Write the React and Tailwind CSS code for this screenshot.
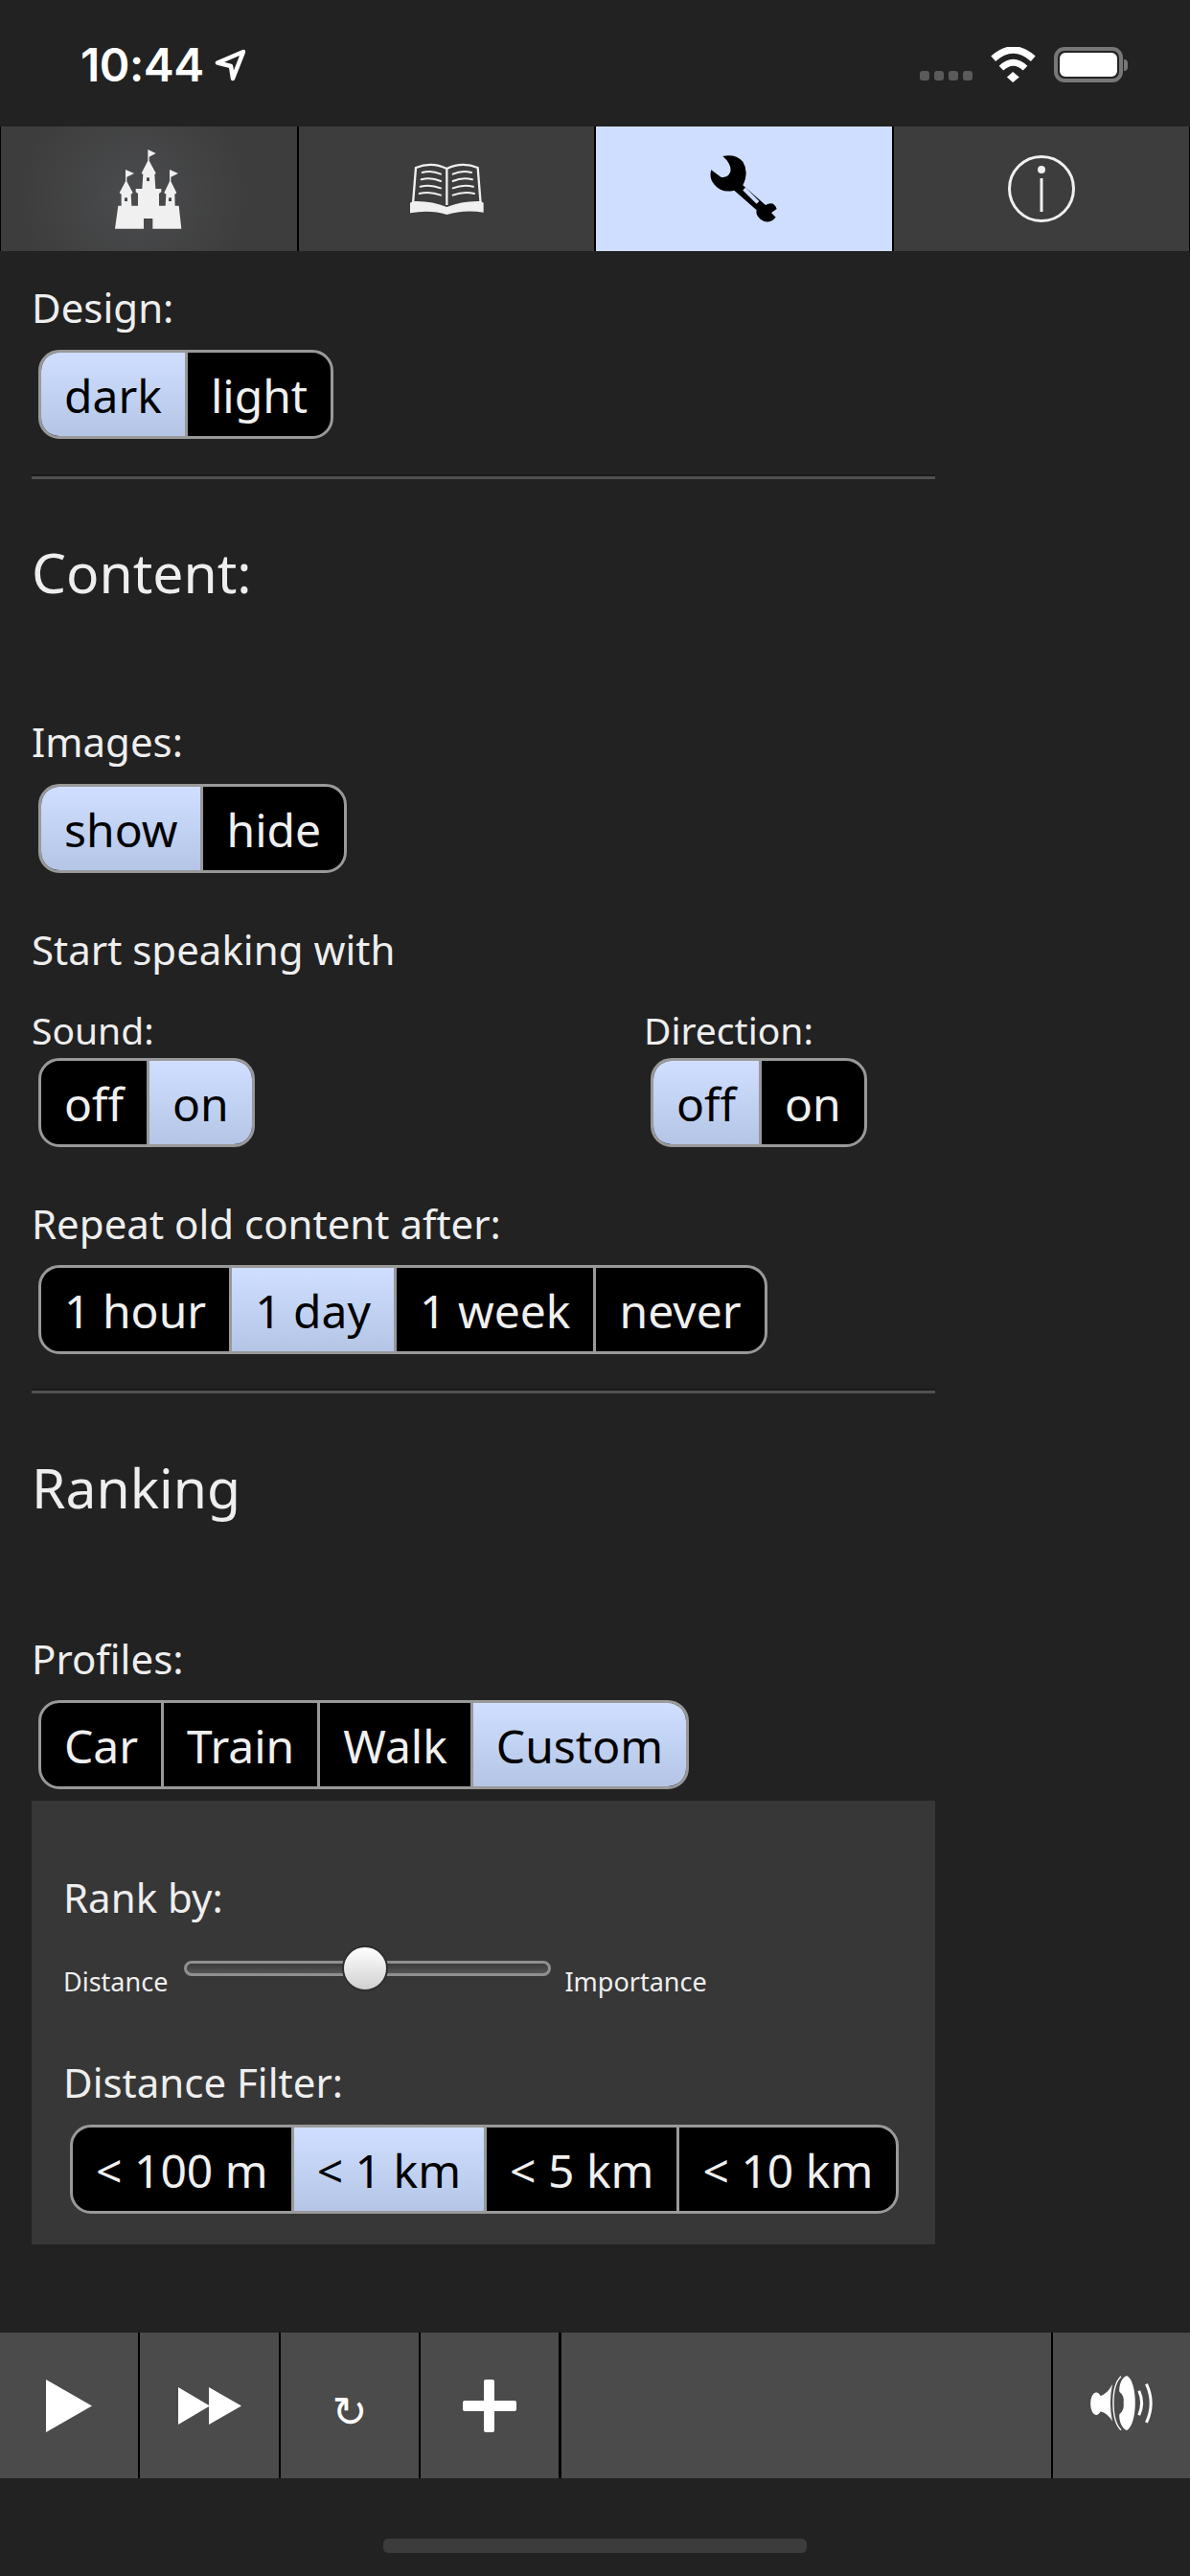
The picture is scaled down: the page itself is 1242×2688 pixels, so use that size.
import React from 'react';

const Seg = ({ items, active, className = '' }) => (
  <div className={`inline-flex h-[93px] rounded-[22px] border-[3px] border-[#999] overflow-hidden bg-black ${className}`}>
    {items.map((item, i) => (
      <div
        key={item}
        className={`flex items-center justify-center px-[24px] pt-[2px] text-[48px] leading-none ${i < items.length - 1 ? 'border-r-[3px] border-[#999]' : ''} ${i === active ? 'bg-gradient-to-b from-[#d0dfff] to-[#b4c5e5] text-black' : 'text-[#f0f0f0]'}`}
      >
        {item}
      </div>
    ))}
  </div>
);

const Label = ({ children, className = '' }) => (
  <div className={`text-[42px] leading-[56px] text-[#eeeeee] ${className}`}>{children}</div>
);

const SmallLabel = ({ children }) => (
  <div className="text-[39px] leading-[56px] text-[#eeeeee]">{children}</div>
);

const Heading = ({ children, className = '' }) => (
  <div className={`text-[57px] leading-[70px] text-[#eeeeee] ${className}`}>{children}</div>
);

const Divider = ({ className = '' }) => (
  <div className={`h-[5px] w-[943px] border-t-2 border-[#1a1a1a] bg-[#505050] ${className}`} />
);

const Castle = () => (
  <svg width="70" height="83" viewBox="120 72 210 249">
    <path fill="#f0f0f0" d="M120 320 L130 248 L140 248 L140 212 L134 208 L153 172 L153 135 L180 147 L157 158 L157 172 L176 208 L170 212 L172 248 L192 248 L192 210 L185 205 L185 195 L205 195 L208 150 L203 146 L223 107 L223 72 L248 84 L227 95 L227 107 L248 146 L244 150 L247 195 L265 195 L265 205 L258 210 L258 248 L278 248 L280 212 L274 208 L291 172 L291 135 L318 147 L295 158 L295 172 L313 208 L307 212 L308 248 L320 248 L328 320 L238 320 L238 288 L210 288 L210 320 Z" />
    <rect x="150" y="223" width="9" height="11" fill="#46474a" />
    <rect x="219" y="160" width="9" height="11" fill="#46474a" />
    <rect x="288" y="223" width="9" height="11" fill="#46474a" />
  </svg>
);

const Book = () => (
  <svg width="78" height="54" viewBox="80 120 232 162">
    <g fill="none" stroke="#f0f0f0" strokeWidth="7">
      <path d="M91 248 L100 135 Q150 115 197 138 L197 252" />
      <path d="M303 248 L294 135 Q245 115 197 138" />
    </g>
    <path fill="#f0f0f0" d="M82 245 L92 240 Q150 238 197 258 Q245 238 303 240 L312 245 L312 275 Q250 265 197 282 Q145 265 82 277 Z" />
    <g fill="none" stroke="#f0f0f0" strokeWidth="6" strokeLinecap="round">
      <path d="M120 150 Q150 142 178 155" />
      <path d="M117 172 Q148 164 178 177" />
      <path d="M114 194 Q146 186 178 199" />
      <path d="M111 216 Q144 208 178 221" />
      <path d="M274 150 Q244 142 216 155" />
      <path d="M277 172 Q246 164 216 177" />
      <path d="M280 194 Q248 186 216 199" />
      <path d="M283 216 Q250 208 216 221" />
    </g>
  </svg>
);

const Wrench = () => (
  <svg width="70" height="70" viewBox="1022 98 210 210">
    <path fill="#000" d="M1062 101 Q1100 92 1125 118 Q1145 150 1125 192 L1196 254 Q1222 240 1231 266 L1214 278 L1228 292 Q1205 318 1180 298 Q1164 285 1168 270 L1098 208 Q1060 218 1036 190 Q1018 170 1026 144 L1056 166 Q1078 170 1086 150 Q1090 125 1062 101 Z" />
    <path stroke="#cfdeff" strokeWidth="12" d="M1129 203 L1172 246" />
  </svg>
);

const Info = () => (
  <svg width="70" height="70" viewBox="0 0 70 70">
    <circle cx="35" cy="35" r="33.5" fill="none" stroke="#f0f0f0" strokeWidth="3" />
    <circle cx="35" cy="15" r="4" fill="#f0f0f0" />
    <rect x="33.5" y="24" width="3" height="35" fill="#f0f0f0" />
  </svg>
);

const Speaker = () => (
  <svg width="66" height="57" viewBox="172 58 196 170">
    <ellipse cx="190" cy="145" rx="18" ry="35" fill="#fff" />
    <path fill="#fff" d="M200 122 Q225 115 240 85 Q228 143 240 200 Q225 172 200 168 Z" />
    <path fill="#fff" fillRule="evenodd" d="M285 58 C320 75 320 210 285 228 C268 222 260 195 262 178 Q278 165 275 143 Q278 120 262 108 C260 90 268 64 285 58 Z" />
    <path fill="none" stroke="#fff" strokeWidth="4" d="M267 60 C235 90 235 195 267 227" />
    <path fill="none" stroke="#fff" strokeWidth="9" d="M323 105 Q340 143 323 181" />
    <path fill="none" stroke="#fff" strokeWidth="9" d="M346 84 Q374 143 346 204" />
  </svg>
);

export default function App() {
  return (
    <div className="w-[1242px] h-[2688px] flex flex-col bg-[#222222] overflow-hidden font-['Noto_Sans',sans-serif]">
      {/* status bar */}
      <div className="h-[132px] shrink-0 flex items-start justify-between pt-[49px] pl-[84px] pr-[65px]">
        <div className="flex items-center gap-[11px]">
          <span className="font-['Inter',sans-serif] font-semibold text-[48px] leading-[38px] tracking-[-0.5px] text-white">10:44</span>
          <svg width="32" height="34" viewBox="226 51 32 34">
            <path d="M256 54 L229 65.5 L243 69 L245 82 Z" fill="none" stroke="#fff" strokeWidth="4.5" strokeLinejoin="round" />
          </svg>
        </div>
        <div className="flex items-end gap-[19px]">
          <div className="flex gap-[5px] mb-[2px]">
            <div className="w-[10px] h-[10px] rounded-[3px] bg-[#5a5a5a]" />
            <div className="w-[10px] h-[10px] rounded-[3px] bg-[#5a5a5a]" />
            <div className="w-[10px] h-[10px] rounded-[3px] bg-[#5a5a5a]" />
            <div className="w-[10px] h-[10px] rounded-[3px] bg-[#5a5a5a]" />
          </div>
          <svg width="47" height="37" viewBox="275 55 142 112">
            <path d="M283 92 Q346 36 409 92" fill="none" stroke="#fff" strokeWidth="22" />
            <path d="M308 122 Q346 86 384 122" fill="none" stroke="#fff" strokeWidth="20" />
            <path d="M326 150 L345 134 L365 150 L345 167 Z" fill="#fff" />
          </svg>
          <div className="flex items-center">
            <div className="w-[72px] h-[37px] rounded-[11px] border-[4px] border-[#777] p-[2px]">
              <div className="w-full h-full rounded-[6px] bg-white" />
            </div>
            <div className="w-[4px] h-[12px] rounded-r-[4px] bg-[#777] ml-[1px]" />
          </div>
        </div>
      </div>

      {/* top tabs */}
      <div className="h-[130px] shrink-0 grid grid-cols-4 gap-[2px] bg-black px-[1px]">
        <div className="flex items-center justify-center bg-[radial-gradient(circle_at_45%_55%,#4b4c4e_0%,#3d3d3d_65%)]"><Castle /></div>
        <div className="flex items-center justify-center bg-[#3d3d3d]"><Book /></div>
        <div className="flex items-center justify-center bg-[#cfdeff]"><Wrench /></div>
        <div className="flex items-center justify-center bg-[#3d3d3d]"><Info /></div>
      </div>

      {/* settings */}
      <div className="flex-1 px-[33px] pt-[31px]">
        <Label>Design:</Label>
        <Seg items={['dark', 'light']} active={0} className="ml-[7px] mt-[16px]" />
        <Divider className="mt-[37px]" />
        <Heading className="mt-[62px]">Content:</Heading>
        <Label className="mt-[114px]">Images:</Label>
        <Seg items={['show', 'hide']} active={0} className="ml-[7px] mt-[16px]" />
        <Label className="mt-[52px]">Start speaking with</Label>
        <div className="flex mt-[28px]">
          <div className="w-[639px]">
            <SmallLabel>Sound:</SmallLabel>
            <Seg items={['off', 'on']} active={1} className="ml-[7px] mt-[1px]" />
          </div>
          <div>
            <SmallLabel>Direction:</SmallLabel>
            <Seg items={['off', 'on']} active={0} className="ml-[7px] mt-[1px]" />
          </div>
        </div>
        <Label className="mt-[52px]">Repeat old content after:</Label>
        <Seg items={['1 hour', '1 day', '1 week', 'never']} active={1} className="ml-[7px] mt-[15px]" />
        <Divider className="mt-[36px]" />
        <Heading className="mt-[63px]">Ranking</Heading>
        <Label className="mt-[116px]">Profiles:</Label>
        <Seg items={['Car', 'Train', 'Walk', 'Custom']} active={3} className="ml-[7px] mt-[15px]" />

        <div className="w-[943px] h-[463px] mt-[12px] bg-[#373737] pl-[33px] pt-[73px]">
          <Label>Rank by:</Label>
          <div className="relative h-[70px] mt-[22px] flex items-start">
            <span className="text-[27px] leading-[36px] text-[#eeeeee] mt-[20px]">Distance</span>
            <div className="relative w-[383px] h-[16px] mt-[16px] ml-[17px] rounded-full border-[3px] border-[#8f8f8f] bg-gradient-to-b from-[#3a3a3a] to-[#555555]">
              <div className="absolute left-[162px] top-[-19px] w-[48px] h-[48px] rounded-full border-2 border-[#2e2e2e] bg-gradient-to-b from-white to-[#d0d0d0]" />
            </div>
            <span className="text-[27px] leading-[36px] text-[#eeeeee] mt-[20px] ml-[14px]">Importance</span>
          </div>
          <Label className="mt-[45px]">Distance Filter:</Label>
          <Seg items={['< 100 m', '< 1 km', '< 5 km', '< 10 km']} active={1} className="ml-[7px] mt-[16px]" />
        </div>
      </div>

      {/* bottom bar */}
      <div className="h-[152px] shrink-0 flex bg-[#4b4b4b] text-white">
        <div className="w-[146px] flex items-center justify-center border-r-[2px] border-black">
          <svg width="48" height="55" viewBox="0 0 48 55"><path d="M0 0 L48 27.5 L0 55 Z" fill="#fff" /></svg>
        </div>
        <div className="w-[147px] flex items-center justify-center border-r-[2px] border-black">
          <svg width="66" height="39" viewBox="0 0 66 39"><path d="M0 0 L33 19.5 L0 39 Z M32 0 L66 19.5 L32 39 Z" fill="#fff" /></svg>
        </div>
        <div className="w-[146px] flex items-center justify-center border-r-[2px] border-black">
          <span className="font-['DejaVu_Sans',sans-serif] text-[44px] leading-none mt-[14px]">↻</span>
        </div>
        <div className="w-[147px] flex items-center justify-center border-r-[3px] border-black">
          <svg width="56" height="55" viewBox="0 0 56 55">
            <rect x="22" y="0" width="11" height="55" rx="2" fill="#fff" />
            <rect x="0" y="22" width="56" height="11" rx="2" fill="#fff" />
          </svg>
        </div>
        <div className="w-[513px] border-r-[2px] border-black" />
        <div className="flex-1 flex items-center justify-center pb-[6px]"><Speaker /></div>
      </div>

      {/* home indicator */}
      <div className="h-[102px] shrink-0 flex justify-center pt-[63px]">
        <div className="w-[442px] h-[15px] rounded-[5px] bg-[#3c3c3c]" />
      </div>
    </div>
  );
}
